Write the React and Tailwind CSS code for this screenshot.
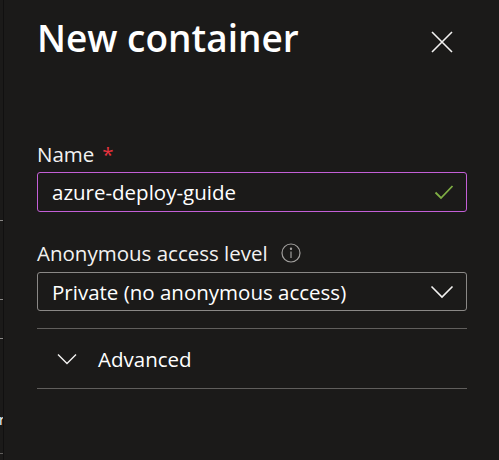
import React from "react";

export default function App() {
  const font = { fontFamily: '"Segoe UI", "Open Sans", "Noto Sans", sans-serif' };
  return (
    <div className="flex h-[460px] w-[499px] overflow-hidden bg-[#1b1a19] text-[#f3f2f1]" style={font}>
      {/* left underlying page strip */}
      <div className="relative h-full w-[4px] shrink-0 overflow-hidden bg-[#1b1a19] border-r border-[#111010]">
        <div className="absolute left-0 top-[220px] h-px w-[4px] bg-[#8a8886]" />
        <div className="absolute left-0 top-[299px] h-px w-[4px] bg-[#8a8886]" />
        <div className="absolute left-0 top-[338px] h-px w-[4px] bg-[#8a8886]" />
        <div className="absolute left-0 top-[453px] h-px w-[4px] bg-[#605e5c]" />
        <div className="absolute left-[-1px] top-[413px] text-[14px] leading-none text-white">r</div>
      </div>

      <div className="flex flex-1 flex-col pl-[33px] pr-[32px]">
        {/* header */}
        <div className="flex items-start justify-between pt-[13px]">
          <h1 className="text-[37px] font-semibold leading-[50px] text-white">New container</h1>
          <button className="mr-[13px] mt-[17px] flex h-[24px] w-[24px] items-center justify-center text-[#f3f2f1]">
            <svg width="22" height="22" viewBox="0 0 22 22" fill="none" stroke="currentColor" strokeWidth="1.6">
              <path d="M1 1 L21 21 M21 1 L1 21" />
            </svg>
          </button>
        </div>

        {/* Name */}
        <div className="mt-[78px] flex items-center text-[20.5px] leading-[26px]">
          <span>Name</span>
          <span className="ml-[8px]" style={{ color: "#e8323e" }}>*</span>
        </div>
        <div className="mt-[5px] flex h-[40px] items-center justify-between rounded-[3px] border border-[#c35fd6] pl-[14px] pr-[12px]">
          <span className="text-[20.5px] leading-[26px] text-white">azure-deploy-guide</span>
          <svg width="20" height="16" viewBox="0 0 20 16" fill="none" stroke="#7fae44" strokeWidth="1.8">
            <path d="M1.5 8.5 L7 14 L18.5 2" />
          </svg>
        </div>

        {/* Anonymous access level */}
        <div className="mt-[28px] flex items-center text-[20.5px] leading-[26px]">
          <span>Anonymous access level</span>
          <svg className="ml-[13px]" width="20" height="20" viewBox="0 0 20 20" fill="none" stroke="#a19f9d" strokeWidth="1.2">
            <circle cx="10" cy="10" r="9" />
            <path d="M10 8.5 V15" />
            <circle cx="10" cy="5.8" r="0.6" fill="#a19f9d" />
          </svg>
        </div>
        <div className="mt-[6px] flex h-[39px] items-center justify-between rounded-[3px] border border-[#8a8886] pl-[14px] pr-[12px]">
          <span className="text-[20.5px] leading-[26px] text-white">Private (no anonymous access)</span>
          <svg width="24" height="14" viewBox="0 0 24 14" fill="none" stroke="#f3f2f1" strokeWidth="1.6">
            <path d="M1.5 1.5 L12 12 L22.5 1.5" />
          </svg>
        </div>

        {/* Advanced */}
        <div className="mt-[17px] h-px bg-[#605e5c]" />
        <div className="flex h-[59px] items-center">
          <svg className="ml-[20px]" width="20" height="12" viewBox="0 0 20 12" fill="none" stroke="#f3f2f1" strokeWidth="1.4">
            <path d="M1 1.5 L10 10.5 L19 1.5" />
          </svg>
          <span className="ml-[21px] text-[20.5px] leading-[26px] text-white">Advanced</span>
        </div>
        <div className="h-px bg-[#605e5c]" />
      </div>
    </div>
  );
}
